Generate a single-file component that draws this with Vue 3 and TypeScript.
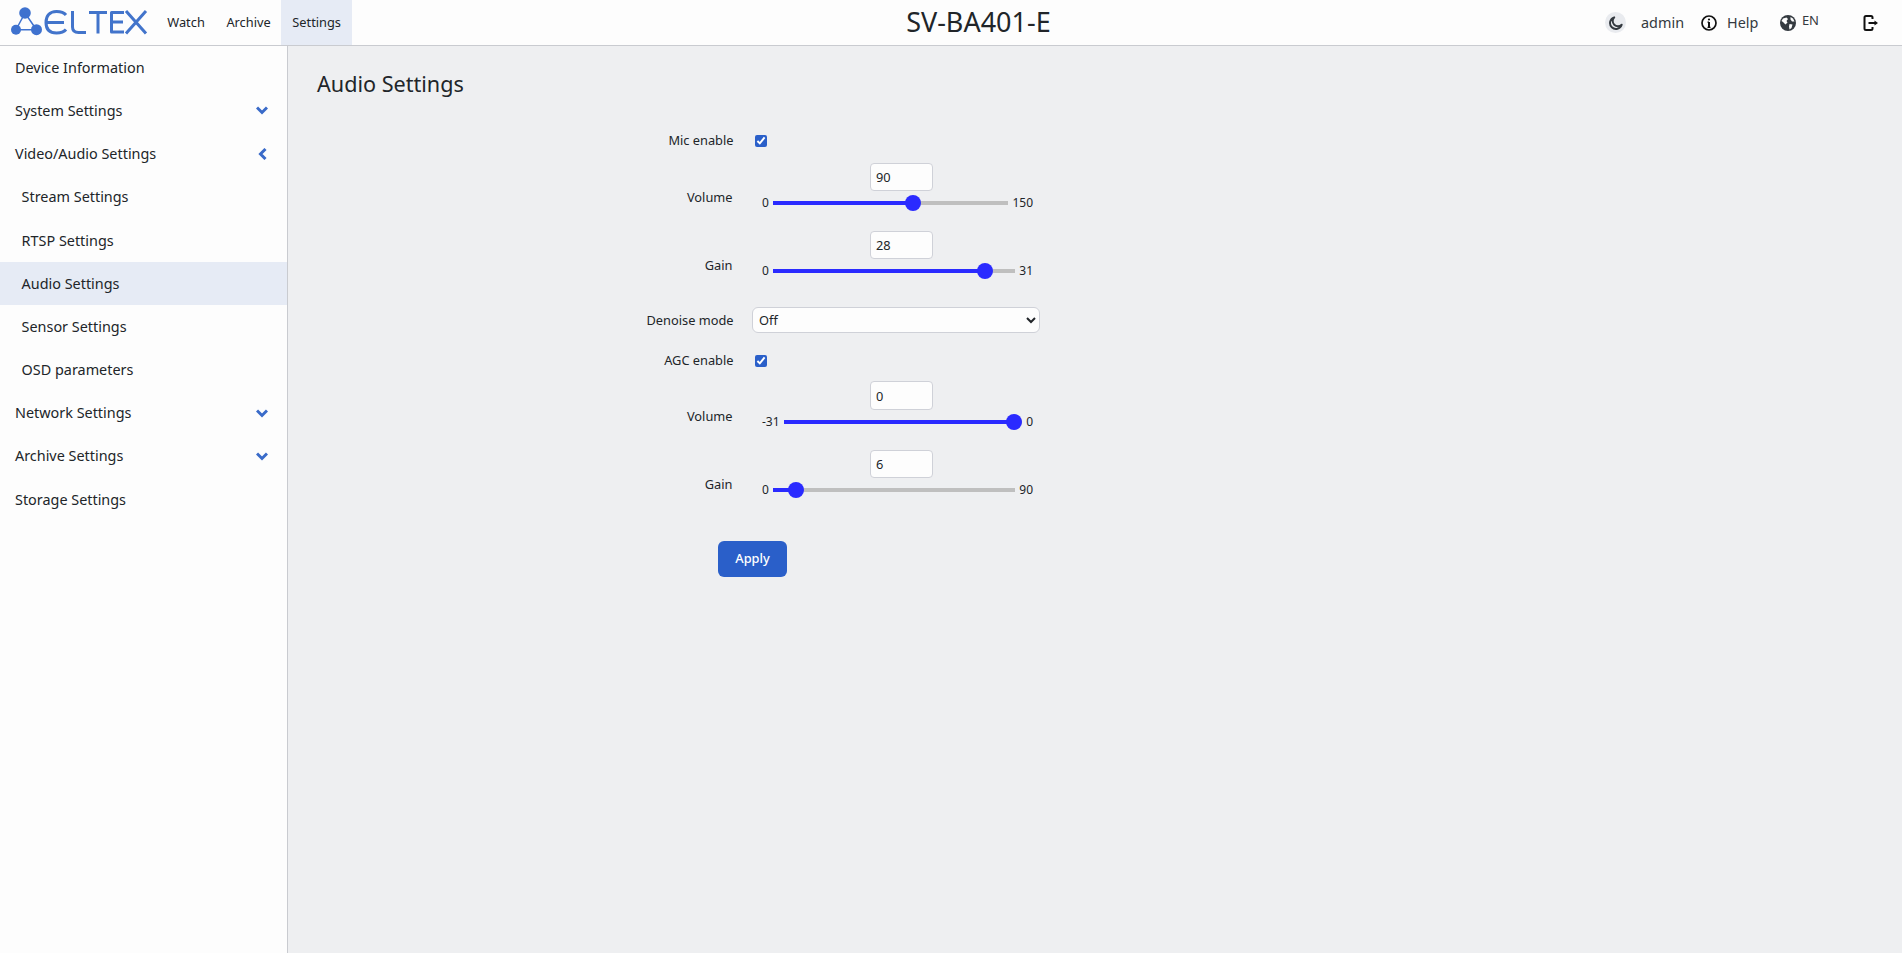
<template>
  <div class="page">
    <header class="topbar">
      <svg class="logo" viewBox="0 0 137 30" fill="none">
        <g fill="#3f72cf">
          <circle cx="14" cy="7" r="5.800" />
          <circle cx="5" cy="23.700" r="5" />
          <circle cx="25.500" cy="23.700" r="5.500" />
        </g>
        <g stroke="#3f72cf" stroke-width="1.500">
          <path d="M14 7 5 23.700H25.500Z" />
        </g>
        <g stroke="#4274cb" stroke-width="3" stroke-linejoin="round">
          <path d="M55 9C53 6.500 50 5.500 45.500 5.500 38.500 5.500 35 10 35 16.500 35 23 38.500 27 45.500 27 50 27 53 26 55 23.500M35.500 16.500H53" />
          <path d="M61.500 5V21C61.500 25 63.500 26.500 67.500 26.500H75" />
          <path d="M78 6.500H96M87 6.500V27.500" />
          <path d="M113 6.500H100.500V26H113M100.500 16H112" />
          <path d="M115 5 135 27.500M135 5 115 27.500" />
        </g>
      </svg>
      <nav class="top-nav">
        <a v-for="item in topLinks" :key="item" class="top-link" :class="{ active: item === 'Settings' }">{{ item }}</a>
      </nav>
      <div class="device-name">SV-BA401-E</div>
      <div class="top-right">
        <span class="theme-btn">
          <svg viewBox="0 0 16 16" width="14" height="14" fill="none" stroke="#343a40" stroke-width="2.200">
            <path d="M6 1.500A6.800 6.800 0 1 0 14.500 10 6 6 0 0 1 6 1.500Z" stroke-linejoin="round" />
          </svg>
        </span>
        <span class="user">admin</span>
        <svg class="info-icon" viewBox="0 0 16 16" width="16" height="16" fill="none" stroke="#111">
          <circle cx="8" cy="8" r="7" stroke-width="1.700" />
          <path d="M8 7V12.500" stroke-width="2" />
          <path d="M6.500 7.200H8M6.500 12.300H9.500" stroke-width="1.200" />
          <circle cx="8" cy="4.500" r="1.100" fill="#111" stroke="none" />
        </svg>
        <span class="help">Help</span>
        <svg class="globe-icon" viewBox="0 0 16 16" width="16" height="16">
          <circle cx="8" cy="8" r="8" fill="#343a40" />
          <path d="M3 3.500 6.500 2.500 8 4 6.500 6 7.500 7.500 5.500 9.500 3 7 1.500 6ZM9.500 9 12.500 9.500 11.500 13 9.500 14.500 9 11.500ZM10.500 2 13 3.500 14.500 6.500 12 6.500 10.500 4.500Z" fill="#fdfdfd" />
        </svg>
        <span class="lang">EN</span>
        <svg class="exit-icon" viewBox="0 0 16 16" width="16" height="16" fill="none" stroke="#111" stroke-width="2">
          <path d="M9.500 4V2.500Q9.500 1 8 1H3Q1.500 1 1.500 2.500V13.500Q1.500 15 3 15H8Q9.500 15 9.500 13.500V12" />
          <path d="M5.500 8H12" />
          <path d="M11.500 5.500 15 8 11.500 10.500Z" fill="#111" stroke="none" />
        </svg>
      </div>
    </header>

    <div class="body-row">
      <aside class="sidebar">
        <div
          v-for="item in sideItems"
          :key="item.label"
          class="side-item"
          :class="{ sub: item.sub, active: item.label === 'Audio Settings' }"
        >
          <span>{{ item.label }}</span>
          <svg v-if="item.arrow === 'down'" class="chevron" viewBox="0 0 12 9" width="12" height="9" fill="none" stroke="#3a6bc9" stroke-width="3">
            <path d="M1 1.500 6 6.500 11 1.500" />
          </svg>
          <svg v-if="item.arrow === 'left'" class="chevron left" viewBox="0 0 9 12" width="9" height="12" fill="none" stroke="#3a6bc9" stroke-width="3">
            <path d="M7.500 1 2.500 6 7.500 11" />
          </svg>
        </div>
      </aside>

      <main class="content">
        <h1 class="title">Audio Settings</h1>
        <form class="form" @submit.prevent>
          <template v-for="row in formRows" :key="row.id">
            <div v-if="row.kind === 'check'" class="row row-check">
              <label class="label">{{ row.label }}</label>
              <div class="control"><input type="checkbox" class="check" checked /></div>
            </div>
            <div v-else-if="row.kind === 'select'" class="row row-select">
              <label class="label">{{ row.label }}</label>
              <div class="control">
                <select class="select"><option>Off</option></select>
              </div>
            </div>
            <div v-else class="row row-slider">
              <label class="label slider-label">{{ row.label }}</label>
              <div class="control">
                <input type="text" class="number" :value="row.value" />
                <div class="slider-line">
                  <span>{{ row.min }}</span>
                  <input
                    type="range"
                    class="range"
                    :min="row.min"
                    :max="row.max"
                    :value="row.value"
                    :style="{ '--fill': fillOf(row) }"
                  />
                  <span>{{ row.max }}</span>
                </div>
              </div>
            </div>
          </template>
          <div class="actions">
            <button type="submit" class="apply">Apply</button>
          </div>
        </form>
      </main>
    </div>
  </div>
</template>

<script setup lang="ts">
interface FormRow {
  id: string
  kind: 'check' | 'select' | 'slider'
  label: string
  min?: number
  max?: number
  value?: number
}

const topLinks = ['Watch', 'Archive', 'Settings']

const sideItems = [
  { label: 'Device Information' },
  { label: 'System Settings', arrow: 'down' },
  { label: 'Video/Audio Settings', arrow: 'left' },
  { label: 'Stream Settings', sub: true },
  { label: 'RTSP Settings', sub: true },
  { label: 'Audio Settings', sub: true },
  { label: 'Sensor Settings', sub: true },
  { label: 'OSD parameters', sub: true },
  { label: 'Network Settings', arrow: 'down' },
  { label: 'Archive Settings', arrow: 'down' },
  { label: 'Storage Settings' },
]

const formRows: FormRow[] = [
  { id: 'mic', kind: 'check', label: 'Mic enable' },
  { id: 'micVolume', kind: 'slider', label: 'Volume', min: 0, max: 150, value: 90 },
  { id: 'micGain', kind: 'slider', label: 'Gain', min: 0, max: 31, value: 28 },
  { id: 'denoise', kind: 'select', label: 'Denoise mode' },
  { id: 'agc', kind: 'check', label: 'AGC enable' },
  { id: 'agcVolume', kind: 'slider', label: 'Volume', min: -31, max: 0, value: 0 },
  { id: 'agcGain', kind: 'slider', label: 'Gain', min: 0, max: 90, value: 6 },
]

// thumb is 16px wide, so the fill has to follow its centre rather than the raw percent
function fillOf(row: FormRow) {
  const min = row.min ?? 0
  const max = row.max ?? 100
  const ratio = ((row.value ?? 0) - min) / (max - min)
  return `calc(8px + (100% - 16px) * ${ratio})`
}
</script>

<style scoped>
.page {
  height: 953px;
  display: flex;
  flex-direction: column;
  font-family: "Noto Sans", sans-serif;
  font-size: 14.4px;
  line-height: 1.5;
  color: #212529;
  overflow: hidden;
}

.topbar {
  flex: 0 0 46px;
  box-sizing: border-box;
  display: flex;
  align-items: stretch;
  background: #fdfdfd;
  border-bottom: 1px solid #c9cbd0;
}

.logo {
  width: 137px;
  height: 30px;
  margin: 6px 0 0 11px;
  flex: none;
}

.top-nav {
  display: flex;
  margin-left: 8.500px;
}

.top-link {
  display: flex;
  align-items: center;
  padding: 0 10.800px;
  font-size: 12.800px;
  color: #212529;
}

.top-link.active {
  background: #e6ebf5;
}

.device-name {
  flex: 1;
  display: flex;
  align-items: center;
  justify-content: center;
  font-size: 27px;
}

.top-right {
  display: flex;
  align-items: center;
  padding-right: 23px;
  font-size: 14.4px;
  color: #343a40;
}

.theme-btn {
  width: 21px;
  height: 21px;
  border-radius: 50%;
  background: #e9ebef;
  display: flex;
  align-items: center;
  justify-content: center;
}

.user {
  margin-left: 15px;
}

.info-icon {
  margin-left: 17px;
}

.help {
  margin-left: 10px;
}

.globe-icon {
  margin-left: 21.500px;
}

.lang {
  margin-left: 6px;
  font-size: 13px;
  margin-top: -3px;
}

.exit-icon {
  margin-left: 44px;
}

.body-row {
  flex: 1;
  display: flex;
  min-height: 0;
}

.sidebar {
  flex: 0 0 288px;
  box-sizing: border-box;
  background: #fdfdfd;
  border-right: 1px solid #c9cbd0;
}

.side-item {
  display: flex;
  align-items: center;
  justify-content: space-between;
  height: 43.200px;
  padding: 0 19px 0 15px;
  box-sizing: border-box;
  color: #212529;
}

.side-item.sub {
  padding-left: 21.600px;
}

.side-item.active {
  background: #e6ebf5;
}

.chevron.left {
  margin-right: 1px;
}

.content {
  flex: 1;
  background: #eeeff1;
  padding: 0 0 0 29px;
}

.title {
  margin: 0;
  padding-top: 22px;
  font-size: 21.600px;
  font-weight: 400;
  line-height: 32px;
}

.form {
  margin-top: 27px;
  width: 723px;
  font-size: 12.800px;
}

.row {
  display: flex;
}

.label {
  width: 416.500px;
  text-align: right;
  flex: none;
}

.control {
  width: 288px;
  margin-left: 18.500px;
  flex: none;
}

.row-check {
  height: 28px;
  align-items: center;
  margin-top: 13.400px;
}

.row-check:first-child {
  margin-top: 0;
}

.check {
  display: block;
  width: 12px;
  height: 12px;
  margin: 0 0 0 3px;
  accent-color: #2a5fc9;
}

.row-slider {
  height: 68.400px;
}

.row-check + .row-slider {
  margin-top: 7.500px;
}

.row-select + .row-check + .row-slider {
  margin-top: 6.600px;
}

.slider-label {
  padding-top: 25.500px;
  padding-right: 1px;
  box-sizing: border-box;
}

.number {
  display: block;
  box-sizing: border-box;
  width: 62.500px;
  height: 28.500px;
  margin-left: 118px;
  padding: 0 5px;
  border: 1px solid #cfd1d8;
  border-radius: 4px;
  background: #fdfdfd;
  font: inherit;
  color: #212529;
}

.slider-line {
  display: flex;
  align-items: center;
  gap: 4px;
  height: 24px;
  padding: 0 7px 0 10px;
  font-size: 12px;
}

.range {
  flex: 1;
  min-width: 0;
  height: 16px;
  margin: 0;
  appearance: none;
  -webkit-appearance: none;
  background: linear-gradient(#2a2aff, #2a2aff) left center / var(--fill) 4px no-repeat,
    linear-gradient(#bfbfbf, #bfbfbf) left center / 100% 4px no-repeat;
}

.range::-webkit-slider-thumb {
  -webkit-appearance: none;
  width: 16px;
  height: 16px;
  border-radius: 50%;
  background: #2a2aff;
  border: none;
}

.row-select {
  height: 26px;
  margin-top: 8px;
  align-items: center;
}

.select {
  display: block;
  width: 288px;
  height: 26px;
  box-sizing: border-box;
  padding: 0 2px;
  border: 1px solid #cfd1d8;
  border-radius: 6px;
  background-color: #fdfdfd;
  font: inherit;
  color: #212529;
}

.actions {
  margin-top: 22.900px;
  padding-left: 401px;
}

.apply {
  display: block;
  width: 69px;
  height: 36px;
  border: none;
  border-radius: 6px;
  background: #2a5fc9;
  color: #fff;
  font: inherit;
  font-weight: 500;
}
</style>

<style>
html,
body {
  margin: 0;
}
</style>
